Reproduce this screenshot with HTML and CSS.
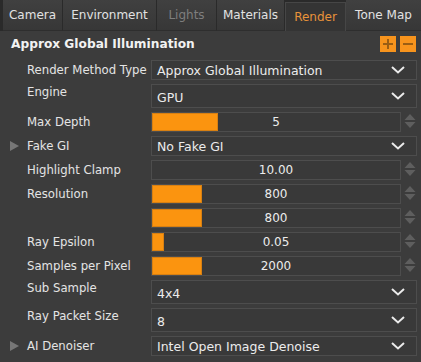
FILE: index.html
```html
<!DOCTYPE html>
<html>
<head>
<meta charset="utf-8">
<link rel="stylesheet" href="styles.css">
</head>
<body>
<div class="panel">
  <div class="tabs">
    <div class="tab w60">Camera</div>
    <div class="tab w94">Environment</div>
    <div class="tab w60 disabled">Lights</div>
    <div class="tab w68">Materials</div>
    <div class="tab w61 active">Render</div>
    <div class="tab grow">Tone Map</div>
  </div>
  <div class="header">
    <div class="title">Approx Global Illumination</div>
    <div class="btns">
      <div class="btn plus"></div>
      <div class="btn minus"></div>
    </div>
  </div>
  <div class="rows">
    <div class="row">
      <div class="exp"></div>
      <div class="label">Render Method Type</div>
      <div class="drop"><span>Approx Global Illumination</span><svg class="chev" width="14" height="8" viewBox="0 0 14 8"><polyline points="1,1 7,6.5 13,1" fill="none" stroke="#eaeaea" stroke-width="2"/></svg></div>
    </div>
    <div class="row tall">
      <div class="exp"></div>
      <div class="label">Engine</div>
      <div class="drop"><span>GPU</span><svg class="chev" width="14" height="8" viewBox="0 0 14 8"><polyline points="1,1 7,6.5 13,1" fill="none" stroke="#eaeaea" stroke-width="2"/></svg></div>
    </div>
    <div class="row">
      <div class="exp"></div>
      <div class="label">Max Depth</div>
      <div class="num">
        <div class="slider"><div class="fill" style="width:66px"></div><span>5</span></div>
        <svg class="spin" width="12" height="20" viewBox="0 0 12 20"><polygon points="6,2 11.5,8 0.5,8" fill="#5e5e5e"/><polygon points="0.5,10 11.5,10 6,16" fill="#5e5e5e"/></svg>
      </div>
    </div>
    <div class="row">
      <div class="exp"><svg width="10" height="10" viewBox="0 0 10 10"><polygon points="0,0 9,5 0,10" fill="#777"/></svg></div>
      <div class="label">Fake GI</div>
      <div class="drop"><span>No Fake GI</span><svg class="chev" width="14" height="8" viewBox="0 0 14 8"><polyline points="1,1 7,6.5 13,1" fill="none" stroke="#eaeaea" stroke-width="2"/></svg></div>
    </div>
    <div class="row">
      <div class="exp"></div>
      <div class="label">Highlight Clamp</div>
      <div class="num">
        <div class="slider"><span>10.00</span></div>
        <svg class="spin" width="12" height="20" viewBox="0 0 12 20"><polygon points="6,2 11.5,8 0.5,8" fill="#5e5e5e"/><polygon points="0.5,10 11.5,10 6,16" fill="#5e5e5e"/></svg>
      </div>
    </div>
    <div class="row">
      <div class="exp"></div>
      <div class="label">Resolution</div>
      <div class="num">
        <div class="slider"><div class="fill" style="width:50px"></div><span>800</span></div>
        <svg class="spin" width="12" height="20" viewBox="0 0 12 20"><polygon points="6,2 11.5,8 0.5,8" fill="#5e5e5e"/><polygon points="0.5,10 11.5,10 6,16" fill="#5e5e5e"/></svg>
      </div>
    </div>
    <div class="row">
      <div class="exp"></div>
      <div class="label"></div>
      <div class="num">
        <div class="slider"><div class="fill" style="width:50px"></div><span>800</span></div>
        <svg class="spin" width="12" height="20" viewBox="0 0 12 20"><polygon points="6,2 11.5,8 0.5,8" fill="#5e5e5e"/><polygon points="0.5,10 11.5,10 6,16" fill="#5e5e5e"/></svg>
      </div>
    </div>
    <div class="row">
      <div class="exp"></div>
      <div class="label">Ray Epsilon</div>
      <div class="num">
        <div class="slider"><div class="fill" style="width:12px"></div><span>0.05</span></div>
        <svg class="spin" width="12" height="20" viewBox="0 0 12 20"><polygon points="6,2 11.5,8 0.5,8" fill="#5e5e5e"/><polygon points="0.5,10 11.5,10 6,16" fill="#5e5e5e"/></svg>
      </div>
    </div>
    <div class="row">
      <div class="exp"></div>
      <div class="label">Samples per Pixel</div>
      <div class="num">
        <div class="slider"><div class="fill" style="width:50px"></div><span>2000</span></div>
        <svg class="spin" width="12" height="20" viewBox="0 0 12 20"><polygon points="6,2 11.5,8 0.5,8" fill="#5e5e5e"/><polygon points="0.5,10 11.5,10 6,16" fill="#5e5e5e"/></svg>
      </div>
    </div>
    <div class="row tall">
      <div class="exp"></div>
      <div class="label">Sub Sample</div>
      <div class="drop"><span>4x4</span><svg class="chev" width="14" height="8" viewBox="0 0 14 8"><polyline points="1,1 7,6.5 13,1" fill="none" stroke="#eaeaea" stroke-width="2"/></svg></div>
    </div>
    <div class="row tall">
      <div class="exp"></div>
      <div class="label">Ray Packet Size</div>
      <div class="drop"><span>8</span><svg class="chev" width="14" height="8" viewBox="0 0 14 8"><polyline points="1,1 7,6.5 13,1" fill="none" stroke="#eaeaea" stroke-width="2"/></svg></div>
    </div>
    <div class="row">
      <div class="exp"><svg width="10" height="10" viewBox="0 0 10 10"><polygon points="0,0 9,5 0,10" fill="#777"/></svg></div>
      <div class="label">AI Denoiser</div>
      <div class="drop"><span>Intel Open Image Denoise</span><svg class="chev" width="14" height="8" viewBox="0 0 14 8"><polyline points="1,1 7,6.5 13,1" fill="none" stroke="#eaeaea" stroke-width="2"/></svg></div>
    </div>
  </div>
</div>
</body>
</html>
```

FILE: styles.css
```css
html, body {
  margin: 0;
  padding: 0;
  background: #3c3c3c;
}
body {
  width: 421px;
  height: 362px;
  overflow: hidden;
  font-family: "DejaVu Sans", Verdana, sans-serif;
  color: #e4e4e4;
}
.panel {
  height: 362px;
  background: #3c3c3c;
}
.tabs {
  display: flex;
  height: 31px;
  background: #2a2a2a;
  padding-left: 3px;
  box-sizing: border-box;
}
.tab {
  box-sizing: border-box;
  height: 31px;
  display: flex;
  align-items: center;
  justify-content: center;
  font-size: 12px;
  color: #e2e2e2;
  background: linear-gradient(#404040, #373737);
  border-right: 1px solid #2a2a2a;
  border-bottom: 1px solid #2e2e2e;
}
.w60 { width: 60px; }
.w94 { width: 94px; }
.w68 { width: 68px; }
.w61 { width: 61px; }
.grow { flex: 1; border-right: none; }
.tab.disabled { color: #7e7e7e; }
.tab.active {
  color: #e8923a;
  background: #343434;
  border: 1px solid #464646;
  border-bottom: none;
  margin-top: 2px;
  height: 29px;
}
.header {
  display: flex;
  align-items: center;
  justify-content: space-between;
  height: 25px;
  padding: 0 5px 0 11px;
}
.title {
  font-size: 12.2px;
  font-weight: bold;
  color: #f2f2f2;
}
.btns {
  display: flex;
  gap: 4px;
}
.btn {
  width: 16px;
  height: 16px;
  background: #f7941d;
  position: relative;
}
.btn::before, .plus::after {
  content: "";
  position: absolute;
  background: #9a5e14;
  left: 3px;
  top: 7px;
  width: 10px;
  height: 2px;
}
.plus::after {
  left: 7px;
  top: 3px;
  width: 2px;
  height: 10px;
}
.rows {
  display: flex;
  flex-direction: column;
  gap: 4px;
  padding-top: 4px;
}
.row {
  display: grid;
  grid-template-columns: 27px 124px 266px;
  height: 20px;
}
.row.tall { height: 24px; }
.exp {
  display: flex;
  align-items: center;
  padding-left: 10px;
}
.label {
  font-size: 11.7px;
  line-height: 20px;
  color: #e4e4e4;
  white-space: nowrap;
}
.tall .label { line-height: 16px; }
.drop {
  box-sizing: border-box;
  border: 1px solid #4d4d4d;
  background: #393939;
  display: flex;
  align-items: center;
  justify-content: space-between;
  padding: 0 11px 0 5px;
  font-size: 12.5px;
  color: #ececec;
  white-space: nowrap;
}
.tall .drop { padding-top: 3px; }
.tall .drop .chev { margin-top: -3px; }
.num {
  display: flex;
  gap: 3px;
}
.slider {
  position: relative;
  box-sizing: border-box;
  width: 250px;
  height: 20px;
  border: 1px solid #4d4d4d;
  background: #393939;
  display: flex;
  align-items: center;
  justify-content: center;
  font-size: 12px;
  color: #ececec;
}
.slider span { position: relative; }
.fill {
  position: absolute;
  left: 0;
  top: 0;
  bottom: 0;
  background: #fb940f;
  box-shadow: inset 0 0 0 1px #d88012;
}
.spin { display: block; }
```
